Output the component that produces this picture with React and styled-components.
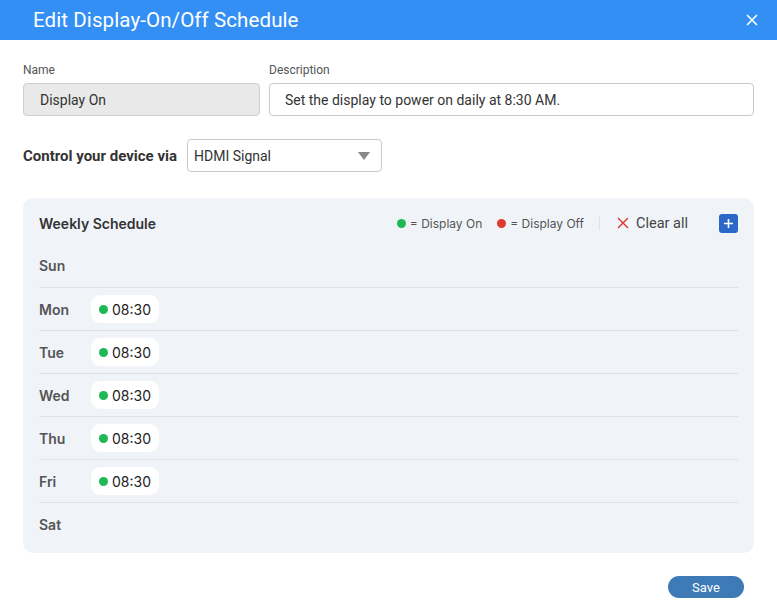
import React from 'react';
import styled, { createGlobalStyle } from 'styled-components';

const GlobalStyle = createGlobalStyle`
  html, body {
    margin: 0;
    padding: 0;
    background: #ffffff;
    font-family: Roboto, "Liberation Sans", Arial, sans-serif;
  }
  * { box-sizing: border-box; }
`;

const Dialog = styled.div`
  width: 777px;
  height: 606px;
  background: #ffffff;
  display: flex;
  flex-direction: column;
`;

const TitleBar = styled.div`
  height: 40px;
  background: #338ff3;
  display: flex;
  align-items: center;
  justify-content: space-between;
  padding: 0 19px 0 33px;
`;

const Title = styled.h1`
  margin: 0;
  font-size: 20.5px;
  font-weight: 400;
  color: #ffffff;
  letter-spacing: 0.1px;
`;

const CloseButton = styled.button`
  background: none;
  border: none;
  padding: 0;
  width: 12px;
  height: 12px;
  display: flex;
  cursor: pointer;
`;

const Body = styled.div`
  padding: 23px 23px 0 23px;
  display: flex;
  flex-direction: column;
`;

const FieldRow = styled.div`
  display: flex;
  gap: 9px;
`;

const Field = styled.div`
  display: flex;
  flex-direction: column;
  width: ${p => p.width}px;
`;

const Label = styled.label`
  font-size: 12px;
  color: #555555;
  margin-bottom: 6px;
  line-height: 14px;
`;

const TextInput = styled.div`
  height: 33px;
  border: 1px solid ${p => (p.disabled ? '#cfcfcf' : '#c9c9c9')};
  background: ${p => (p.disabled ? '#e9e9e9' : '#ffffff')};
  border-radius: 4px;
  padding: 0 ${p => (p.disabled ? 16 : 15)}px;
  display: flex;
  align-items: center;
  font-size: 14px;
  color: #333333;
`;

const ControlRow = styled.div`
  display: flex;
  align-items: center;
  margin-top: 23px;
  gap: 10px;
`;

const ControlLabel = styled.span`
  font-size: 15px;
  font-weight: 700;
  color: #333333;
`;

const Select = styled.div`
  width: 195px;
  height: 33px;
  border: 1px solid #c9c9c9;
  border-radius: 4px;
  padding: 0 11px 0 6px;
  display: flex;
  align-items: center;
  justify-content: space-between;
  font-size: 14px;
  color: #333333;
`;

const Caret = styled.span`
  width: 0;
  height: 0;
  border-left: 6px solid transparent;
  border-right: 6px solid transparent;
  border-top: 8px solid #888888;
`;

const Panel = styled.div`
  margin-top: 26px;
  background: #f0f4f9;
  border-radius: 10px;
  padding: 11px 16px 8px 16px;
  height: 355px;
  font-family: Inter, Roboto, "Liberation Sans", sans-serif;
`;

const PanelHeader = styled.div`
  display: flex;
  align-items: center;
  height: 28px;
  margin-bottom: 7px;
`;

const PanelTitle = styled.h2`
  margin: 0;
  font-size: 14px;
  font-weight: 600;
  color: #333333;
  flex: 1;
`;

const Legend = styled.div`
  display: flex;
  align-items: center;
  gap: 4px;
  font-size: 12px;
  color: #555555;
  margin-right: ${p => p.gap}px;
`;

const Dot = styled.span`
  width: 9px;
  height: 9px;
  border-radius: 50%;
  background: ${p => (p.off ? '#de3a2f' : '#1db954')};
  display: inline-block;
`;

const Divider = styled.span`
  width: 1px;
  height: 14px;
  background: #dde2e8;
  margin: 0 17px 0 15px;
`;

const ClearButton = styled.button`
  background: none;
  border: none;
  padding: 0;
  display: flex;
  align-items: center;
  gap: 7px;
  font-family: Roboto, "Liberation Sans", sans-serif;
  font-size: 14.5px;
  color: #444444;
  margin-right: 31px;
  cursor: pointer;
`;

const AddButton = styled.button`
  width: 19px;
  height: 19px;
  border: none;
  border-radius: 3px;
  background: #2a67c9;
  padding: 0;
  display: flex;
  align-items: center;
  justify-content: center;
  cursor: pointer;
`;

const DayRow = styled.div`
  height: 43px;
  display: flex;
  align-items: center;
  border-top: ${p => (p.first ? 'none' : '1px solid #dde2e8')};
`;

const DayName = styled.span`
  width: 52px;
  font-size: 14px;
  font-weight: 600;
  color: #555555;
`;

const Chip = styled.span`
  height: 28px;
  padding: 0 8px;
  border-radius: 9px;
  background: #ffffff;
  display: inline-flex;
  align-items: center;
  gap: 4px;
  font-size: 14px;
  color: #222222;
`;

const Footer = styled.div`
  display: flex;
  justify-content: flex-end;
  padding: 23px 33px 0 0;
`;

const SaveButton = styled.button`
  width: 76px;
  height: 22px;
  border: none;
  border-radius: 11px;
  background: #3e7bb6;
  color: #ffffff;
  font-family: Roboto, "Liberation Sans", sans-serif;
  font-size: 13px;
  padding: 0;
  cursor: pointer;
`;

const days = [
  { name: 'Sun', times: [] },
  { name: 'Mon', times: [{ time: '08:30', on: true }] },
  { name: 'Tue', times: [{ time: '08:30', on: true }] },
  { name: 'Wed', times: [{ time: '08:30', on: true }] },
  { name: 'Thu', times: [{ time: '08:30', on: true }] },
  { name: 'Fri', times: [{ time: '08:30', on: true }] },
  { name: 'Sat', times: [] },
];

const App = () => {
  return (
    <>
      <GlobalStyle />
      <Dialog>
        <TitleBar>
          <Title>Edit Display-On/Off Schedule</Title>
          <CloseButton aria-label="Close">
            <svg width="12" height="12" viewBox="0 0 12 12">
              <path d="M1 1L11 11M11 1L1 11" stroke="#ffffff" strokeWidth="1.6" />
            </svg>
          </CloseButton>
        </TitleBar>

        <Body>
          <FieldRow>
            <Field width={237}>
              <Label>Name</Label>
              <TextInput disabled>Display On</TextInput>
            </Field>
            <Field width={485}>
              <Label>Description</Label>
              <TextInput>Set the display to power on daily at 8:30 AM.</TextInput>
            </Field>
          </FieldRow>

          <ControlRow>
            <ControlLabel>Control your device via</ControlLabel>
            <Select>
              HDMI Signal
              <Caret />
            </Select>
          </ControlRow>

          <Panel>
            <PanelHeader>
              <PanelTitle>Weekly Schedule</PanelTitle>
              <Legend gap={15}>
                <Dot /> = Display On
              </Legend>
              <Legend gap={0}>
                <Dot off /> = Display Off
              </Legend>
              <Divider />
              <ClearButton>
                <svg width="12" height="12" viewBox="0 0 12 12">
                  <path d="M1 1L11 11M11 1L1 11" stroke="#d9362b" strokeWidth="1.4" />
                </svg>
                Clear all
              </ClearButton>
              <AddButton aria-label="Add">
                <svg width="11" height="11" viewBox="0 0 11 11">
                  <path d="M5.5 1V10M1 5.5H10" stroke="#ffffff" strokeWidth="1.6" />
                </svg>
              </AddButton>
            </PanelHeader>

            {days.map((day, i) => (
              <DayRow key={day.name} first={i === 0}>
                <DayName>{day.name}</DayName>
                {day.times.map(t => (
                  <Chip key={t.time}>
                    <Dot off={!t.on} />
                    {t.time}
                  </Chip>
                ))}
              </DayRow>
            ))}
          </Panel>
        </Body>

        <Footer>
          <SaveButton>Save</SaveButton>
        </Footer>
      </Dialog>
    </>
  );
};

export default App;
